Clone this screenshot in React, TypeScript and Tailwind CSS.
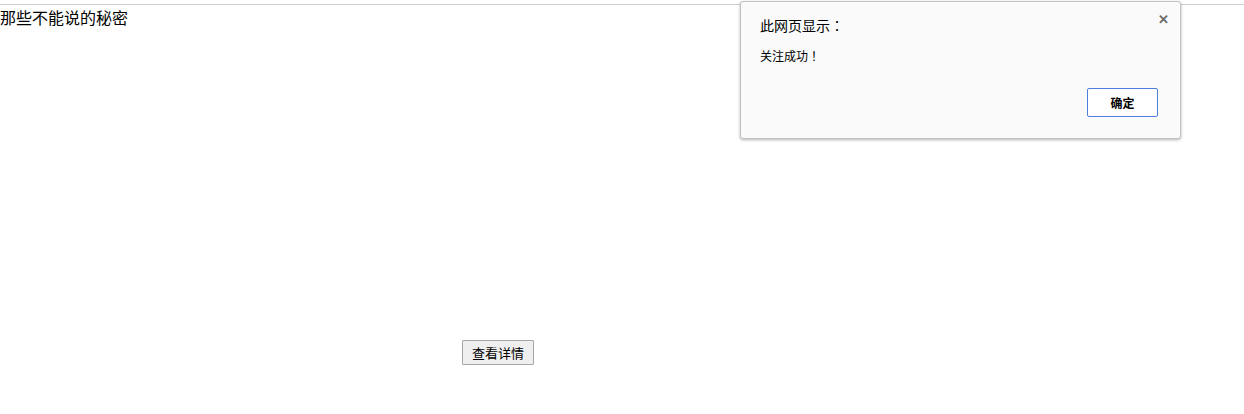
import React from "react";

const TC = '"Noto Sans CJK TC", "Noto Sans CJK SC", sans-serif';

export default function App() {
  return (
    <div
      className="relative w-[1244px] h-[414px] bg-white overflow-hidden text-black"
      style={{ fontFamily: '"Noto Sans CJK SC", "Liberation Sans", sans-serif' }}
    >
      <div className="h-[4px] bg-white" />
      <div className="h-px bg-[#cfcfcf]" />
      <div className="text-[16px] leading-[22px] pt-[1px]">那些不能说的秘密</div>
      <div className="mt-[312px] pl-[462px]">
        <button className="w-[72px] h-[25px] border border-[#a6a6a6] bg-[#efefef] text-[13px] leading-none text-black rounded-[1px] flex items-center justify-center">
          查看详情
        </button>
      </div>

      <div className="absolute left-[740px] top-[1px] w-[441px] h-[138px] bg-[#fafafa] border border-[#c3c3c3] rounded-[3px] shadow-[0_1px_3px_rgba(0,0,0,0.3)]">
        <button className="absolute right-[11px] top-[10px] text-[#6b6b6b] text-[13px] font-bold leading-none">
          ✕
        </button>
        <div className="pl-[19px] pt-[14px] h-[32px] text-[14px] leading-[18px]">
          此网页显示<span style={{ fontFamily: TC }}>：</span>
        </div>
        <div className="pl-[19px] pt-[14px] h-[30px] text-[12px] leading-[16px]">
          关注成功<span style={{ fontFamily: TC }}>！</span>
        </div>
        <div className="flex justify-end pr-[22px] pt-[24px]">
          <button className="w-[71px] h-[29px] border border-[#4d7fdc] rounded-[2px] bg-white text-[12px] font-bold leading-none flex items-center justify-center">
            确定
          </button>
        </div>
      </div>
    </div>
  );
}
